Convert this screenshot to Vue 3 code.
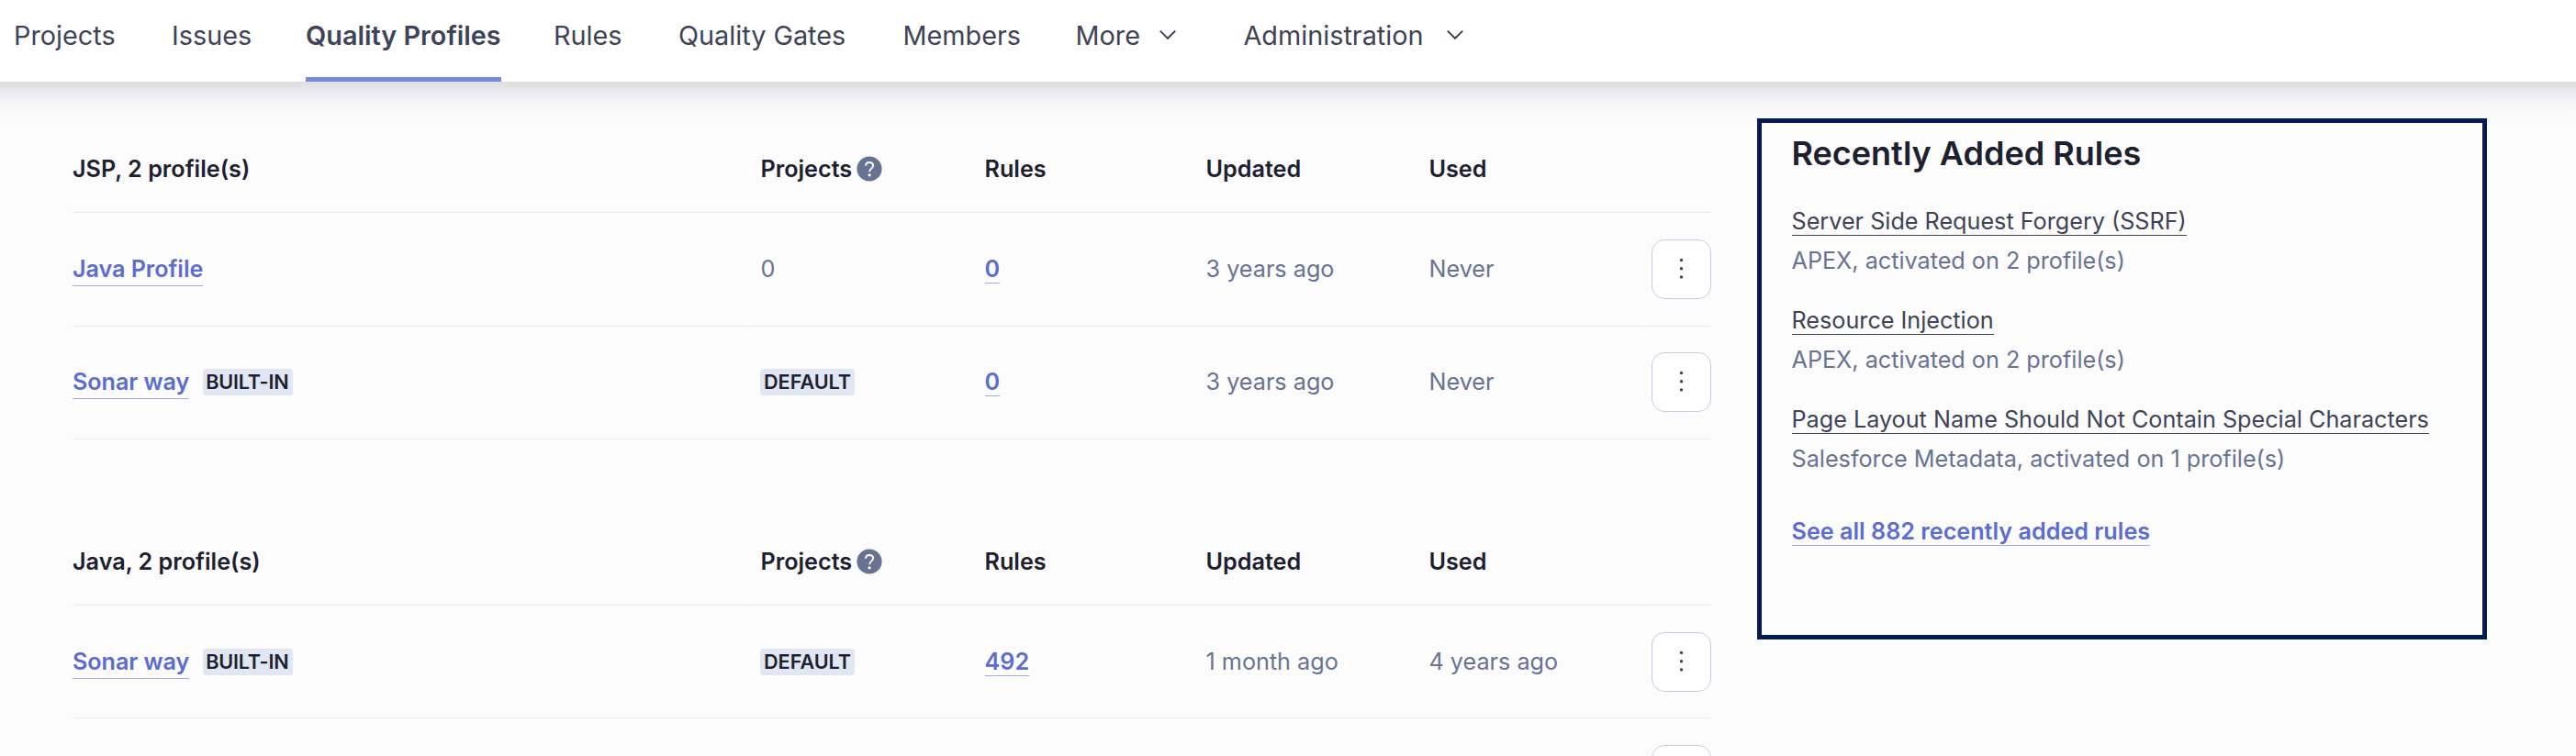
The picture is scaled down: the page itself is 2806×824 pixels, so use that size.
<script setup>
const nav = [
  { label: 'Projects', w: 172 },
  { label: 'Issues', w: 146 },
  { label: 'Quality Profiles', w: 270, active: true },
  { label: 'Rules', w: 136 },
  { label: 'Quality Gates', w: 244.5 },
  { label: 'Members', w: 188 },
  { label: 'More', w: 183, menu: true },
  { label: 'Administration', w: 260, menu: true, wide: true },
]
const tables = [
  {
    title: 'JSP, 2 profile(s)',
    rows: [
      { name: 'Java Profile', projects: '0', rules: '0', updated: '3 years ago', used: 'Never' },
      { name: 'Sonar way', builtIn: true, rules: '0', updated: '3 years ago', used: 'Never' },
    ],
  },
  {
    title: 'Java, 2 profile(s)',
    rows: [
      { name: 'Sonar way', builtIn: true, rules: '492', updated: '1 month ago', used: '4 years ago' },
      { name: '', projects: '', rules: '', updated: '', used: '' },
    ],
  },
]
const recent = [
  { name: 'Server Side Request Forgery (SSRF)', info: 'APEX, activated on 2 profile(s)' },
  { name: 'Resource Injection', info: 'APEX, activated on 2 profile(s)' },
  { name: 'Page Layout Name Should Not Contain Special Characters', info: 'Salesforce Metadata, activated on 1 profile(s)' },
]
</script>

<template>
  <div class="page">
    <nav class="nav">
      <div v-for="n in nav" :key="n.label" class="slot" :style="{ width: n.w + 'px' }">
        <a class="tab" :class="{ active: n.active }">
          <span>{{ n.label }}</span>
          <svg v-if="n.menu" class="chev" :class="{ wide: n.wide }" width="20" height="12" viewBox="0 0 20 12"><path d="M1.8 1.6 10 9.8l8.2-8.2" fill="none" stroke="#3e4357" stroke-width="2" /></svg>
        </a>
      </div>
    </nav>
    <main class="body">
      <section class="tables">
        <div v-for="t in tables" :key="t.title" class="table">
          <div class="row head">
            <div class="cell">{{ t.title }}</div>
            <div class="cell mid">
              <div class="proj">
                <span>Projects</span>
                <svg class="help" width="28" height="28" viewBox="0 0 28 28">
                  <circle cx="14" cy="14" r="13.6" fill="#687394" />
                  <path d="M10 10.8C10 8.2 11.6 7 14 7s4.1 1.4 4.1 3.6c0 2.9-4 3.2-4 6.6" fill="none" stroke="#fff" stroke-width="1.9" />
                  <circle cx="14.1" cy="20.8" r="1.6" fill="#fff" />
                </svg>
              </div>
              <div>Rules</div>
              <div>Updated</div>
              <div>Used</div>
            </div>
            <div class="cell"></div>
          </div>
          <div v-for="(r, i) in t.rows" :key="i" class="row item">
            <div class="cell">
              <a v-if="r.name" class="link name">{{ r.name }}</a>
              <span v-if="r.builtIn" class="badge built">BUILT-IN</span>
            </div>
            <div class="cell mid">
              <div><span v-if="r.builtIn" class="badge default">DEFAULT</span><template v-else>{{ r.projects }}</template></div>
              <div><a v-if="r.rules" class="link count">{{ r.rules }}</a></div>
              <div>{{ r.updated }}</div>
              <div>{{ r.used }}</div>
            </div>
            <div class="cell act">
              <button class="btn" aria-label="Actions">
                <svg width="7" height="28" viewBox="0 0 7 28"><g fill="#3e4357"><circle cx="3.5" cy="4.5" r="1.7" /><circle cx="3.5" cy="13.7" r="1.7" /><circle cx="3.5" cy="22.9" r="1.7" /></g></svg>
              </button>
            </div>
          </div>
        </div>
      </section>
      <aside class="panel">
        <h2>Recently Added Rules</h2>
        <div v-for="r in recent" :key="r.name" class="rule">
          <a class="rlink">{{ r.name }}</a>
          <span class="info">{{ r.info }}</span>
        </div>
        <div class="all"><a class="link see">See all 882 recently added rules</a></div>
      </aside>
    </main>
  </div>
</template>

<style>
body { background: #fcfcfc; }
</style>
<style scoped>
.page { width: 2806px; height: 824px; overflow: hidden; background: #fcfcfc; font: 400 25.2px/36px Inter, sans-serif; color: #687394; box-sizing: border-box; }
.page * { box-sizing: border-box; }
.nav { display: flex; height: 89px; padding-left: 15px; background: #fff; font-size: 28.8px; color: #3e4357; position: relative; }
/* soft shadow under the bar */
.nav::after { content: ''; position: absolute; left: 0; right: 0; top: 89px; height: 50px; background: linear-gradient(#dedee1 0, #e3e3e6 10%, #ececee 24%, #f2f2f4 36%, #f7f7f9 52%, #fafafb 72%, #fcfcfc 100%); z-index: 0; }
.slot { flex: none; white-space: nowrap; }
.tab { display: inline-flex; align-items: center; height: 89px; padding-bottom: 6px; border-bottom: 5px solid transparent; }
.active { font-weight: 600; border-bottom-color: #7b87d9; }
.chev { margin: 0 0 2px 20px; }
.wide { margin-left: 24px; }
.body { display: flex; align-items: flex-start; position: relative; }
.tables { width: 1785px; margin-left: 79px; padding-top: 48px; }
.table { width: 1785px; margin-bottom: 86px; }
.row { display: grid; grid-template-columns: 734px 970px 79px; column-gap: 1px; height: 123px; }
.head { height: 95px; font-weight: 600; color: #1d212f; }
.cell { display: flex; align-items: center; border-bottom: 1px solid #ebebed; white-space: nowrap; }
.table:first-child .item:nth-child(2) { height: 124px; }
.table:first-child .item:nth-child(2) .cell { padding-bottom: 1px; }
.table:first-child .item:nth-child(3) { column-gap: 0; grid-template-columns: 735px 971px 79px; }
.table:first-child .item:nth-child(3) .cell { padding-bottom: 2px; }
.mid { display: grid; grid-template-columns: 244px 241px 243px 1fr; padding-left: 14.5px; }
.mid > div { display: flex; align-items: center; }
.mid > .proj { gap: 4.5px; }
.link { font-weight: 600; color: #5d6cd0; border-bottom: 1px solid #9fa9ed; }
.name { line-height: 36px; padding-top: 1px; letter-spacing: -0.07px; }
.count, .see, .rlink { line-height: 30px; }
.see, .rlink { align-self: flex-start; }
.badge { height: 29px; line-height: 29px; padding: 0 4px; border-radius: 3.5px; background: #e1e6f3; color: #1d212f; font-size: 21.6px; font-weight: 600; }
.built { margin-left: 15px; width: 98px; padding: 0 3px; letter-spacing: -0.2px; }
.default { margin-left: -0.5px; }
.act { justify-content: flex-end; }
.btn { width: 65px; height: 65px; padding: 0; border: 1px solid #c5cde4; border-radius: 14px; background: #fff; display: flex; align-items: center; justify-content: center; }
.panel { width: 795px; height: 568px; margin: 40px 0 0 50px; padding: 15px 32.5px; border: 5px solid #051b52; background: #fcfcfc; }
h2 { margin: 0 0 35px; font-size: 36px; line-height: 36px; font-weight: 600; color: #1d212f; }
.rule { height: 108px; white-space: nowrap; display: flex; flex-direction: column; padding-top: 6px; }
.rlink { color: #3e4357; border-bottom: 1px solid #3e4357; }
.info { margin-top: 9px; }
.all { display: flex; padding-top: 20px; }
</style>
